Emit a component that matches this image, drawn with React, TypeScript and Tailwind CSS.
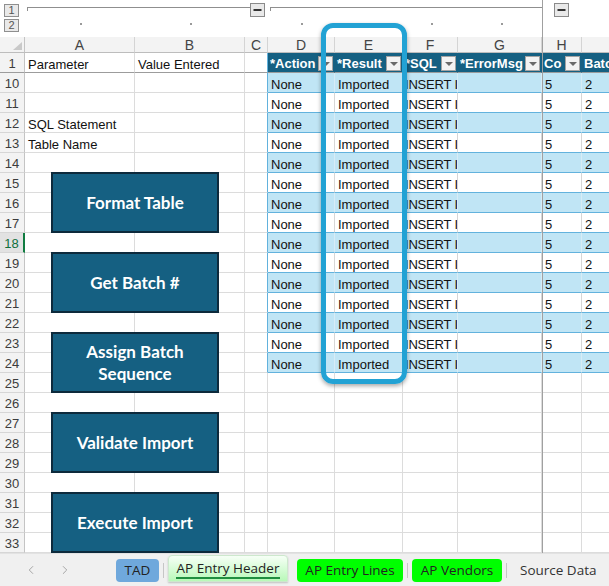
import React from "react";
import { ChevronLeft, ChevronRight } from "lucide-react";

type Col = { k: string; w: string };
const COLS: Col[] = [
  { k: "A", w: "w-[110px]" },
  { k: "B", w: "w-[110px]" },
  { k: "C", w: "w-[23px]" },
  { k: "D", w: "w-[67px]" },
  { k: "E", w: "w-[68px]" },
  { k: "F", w: "w-[55px]" },
  { k: "G", w: "w-[84px]" },
  { k: "H", w: "w-[40px]" },
  { k: "I", w: "w-[60px]" },
];

const TABLE_COLS = ["D", "E", "F", "G", "H", "I"];
const HEADERS: Record<string, string> = {
  D: "*Action",
  E: "*Result",
  F: "*SQL",
  G: "*ErrorMsg",
  H: "Co",
  I: "Batch",
};
const DATA: Record<string, string> = {
  D: "None",
  E: "Imported",
  F: "INSERT INTO",
  G: "",
  H: "5",
  I: "2",
};

const ROWS: number[] = [1];
for (let i = 10; i <= 33; i++) ROWS.push(i);

const A_TEXT: Record<number, string> = {
  1: "Parameter",
  12: "SQL Statement",
  13: "Table Name",
};

function FilterBtn() {
  return (
    <div className="w-[15px] h-[15px] shrink-0 box-border border border-[#a3a3a3] bg-[#f3f3f3] flex items-center justify-center mb-[1px] mr-[1px]">
      <div className="w-0 h-0 border-l-[4px] border-r-[4px] border-t-[4px] border-l-transparent border-r-transparent border-t-[#6a6a6a]" />
    </div>
  );
}

function Cell({ r, c }: { r: number; c: Col }) {
  const inTable = TABLE_COLS.includes(c.k) && (r === 1 || (r >= 10 && r <= 24));
  const base =
    "shrink-0 box-border h-[20px] border-r border-b overflow-hidden whitespace-nowrap text-[13px] " + c.w;
  const bottom =
    r === 1
      ? "border-b-[#9c9c9c]"
      : inTable
      ? "border-b-[#62b2dd]"
      : "border-b-[#dcdcdc]";

  if (inTable && r === 1) {
    return (
      <div className={base + " " + bottom + " border-r-[#156082] bg-[#156082] text-white font-bold flex items-end"}>
        <span className="flex-1 min-w-0 overflow-hidden pl-[2px] leading-[17px]">{HEADERS[c.k]}</span>
        {c.k !== "I" && <FilterBtn />}
      </div>
    );
  }
  if (inTable) {
    const blue = r % 2 === 0;
    const pad = c.k === "F" ? " pl-[2px] pr-0 tracking-[-0.2px]" : " px-[3px]";
    return (
      <div
        className={
          base +
          " " +
          bottom +
          (blue ? " bg-[#c0e5f5] border-r-[#d7ecf6]" : " bg-white border-r-[#d6d6d6]") +
          pad +
          " pt-[3px] leading-[17px] text-[#111]"
        }
      >
        {DATA[c.k]}
      </div>
    );
  }
  const tableEdge = c.k === "C" && (r === 1 || (r >= 10 && r <= 24));
  const right = tableEdge ? "border-r-[#62b2dd]" : "border-r-[#dcdcdc]";
  let text = "";
  if (c.k === "A") text = A_TEXT[r] || "";
  if (c.k === "B" && r === 1) text = "Value Entered";
  return (
    <div className={base + " " + bottom + " " + right + " px-[3px] pt-[3px] leading-[17px] text-[#111]"}>
      {text}
    </div>
  );
}

function RowHeader({ r }: { r: number }) {
  const sel = r === 18;
  return (
    <div
      className={
        "shrink-0 box-border w-[25px] h-[20px] border-b flex items-center justify-center text-[13px] leading-[17px] pt-[2px] " +
        (r === 1 ? "border-b-[#9c9c9c] " : "border-b-[#d6d6d6] ") +
        (sel
          ? "bg-[#e2e2e2] text-[#10703c] border-r-2 border-r-[#107c41]"
          : "bg-[#f3f3f3] text-[#3c3c3c] border-r border-r-[#c4c4c4]")
      }
    >
      {r}
    </div>
  );
}

function Outline() {
  const dots = [55, 165, 276, 344, 406, 476];
  return (
    <div className="flex h-[37px] bg-white">
      <div className="w-[25px] shrink-0 flex flex-col gap-[2px] pl-[4px] pt-[4px]">
        <div className="w-[15px] h-[13px] box-border border border-[#8f8f8f] bg-[#e9e9e9] text-[11px] leading-[11px] text-[#555] flex items-center justify-center">
          1
        </div>
        <div className="w-[15px] h-[13px] box-border border border-[#8f8f8f] bg-[#e9e9e9] text-[11px] leading-[11px] text-[#555] flex items-center justify-center">
          2
        </div>
      </div>
      <svg width="584" height="37" className="shrink-0">
        <line x1="2" y1="7.5" x2="225" y2="7.5" stroke="#8f8f8f" strokeWidth="1" />
        <line x1="2.5" y1="7" x2="2.5" y2="11" stroke="#8f8f8f" strokeWidth="1" />
        <rect x="225.5" y="3.5" width="14" height="13" fill="#e9e9e9" stroke="#8a8a8a" />
        <line x1="228.5" y1="10" x2="236.5" y2="10" stroke="#333" strokeWidth="2" />
        <line x1="245" y1="7.5" x2="517" y2="7.5" stroke="#8f8f8f" strokeWidth="1" />
        <line x1="245.5" y1="7" x2="245.5" y2="11" stroke="#8f8f8f" strokeWidth="1" />
        <rect x="529.5" y="3.5" width="14" height="13" fill="#e9e9e9" stroke="#8a8a8a" />
        <line x1="532.5" y1="10" x2="540.5" y2="10" stroke="#333" strokeWidth="2" />
        {dots.map((x) => (
          <rect key={x} x={x} y="23" width="2" height="2" fill="#9a9a9a" />
        ))}
      </svg>
    </div>
  );
}

function ColumnHeader() {
  return (
    <div className="flex h-[16px]">
      <div className="shrink-0 w-[25px] h-[16px] box-border border-r border-b border-r-[#c4c4c4] border-b-[#bdbdbd] bg-[#f3f3f3] flex items-end justify-end pr-[2px] pb-[2px]">
        <svg width="9" height="8">
          <polygon points="9,0 9,8 0,8" fill="#c9c9c9" />
        </svg>
      </div>
      {COLS.map((c) => (
        <div
          key={c.k}
          className={
            "shrink-0 h-[16px] box-border border-r border-b border-r-[#d4d4d4] border-b-[#bdbdbd] bg-[#f3f3f3] text-[14px] leading-[16px] text-[#444] text-center " +
            c.w
          }
        >
          {c.k}
        </div>
      ))}
    </div>
  );
}

function ActionButton({ lines }: { lines: string[] }) {
  return (
    <div className="w-[168px] h-[61px] box-border border-2 border-[#0d2a3c] bg-[#156082] flex flex-col items-center justify-center text-white font-bold text-[17px] leading-[22px] font-['Lato',sans-serif]">
      {lines.map((l) => (
        <span key={l}>{l}</span>
      ))}
    </div>
  );
}

function TabBar() {
  return (
    <div className="h-[33px] box-border border-t border-t-[#e2e2e2] bg-[#f0f0f0] flex items-end pb-[4px] font-['Open_Sans',sans-serif] text-[13.5px] text-[#222]">
      <ChevronLeft size={14} strokeWidth={1.5} className="ml-[24px] mb-[5px] text-[#9a9a9a]" />
      <ChevronRight size={14} strokeWidth={1.5} className="ml-[20px] mb-[5px] text-[#9a9a9a]" />
      <div className="ml-[44px] w-[43px] h-[23px] rounded-[4px] bg-[#6fa8dc] flex items-center justify-center">TAD</div>
      <div className="ml-[4px] mb-[4px] w-px h-[15px] bg-[#c6c6c6]" />
      <div className="ml-[4px] w-[120px] h-[27px] rounded-t-[4px] box-border border border-[#cde8cd] bg-gradient-to-b from-[#f6fff6] to-[#b8f8b8] shadow-[0_1px_2px_rgba(0,0,0,0.2)] flex flex-col items-center justify-end pb-[2px]">
        <span className="leading-[18px] border-b-2 border-b-[#1f8f3f] px-[1px]">AP Entry Header</span>
      </div>
      <div className="ml-[9px] w-[106px] h-[23px] rounded-[4px] bg-[#00ff00] flex items-center justify-center">AP Entry Lines</div>
      <div className="ml-[4px] mb-[4px] w-px h-[15px] bg-[#c6c6c6]" />
      <div className="ml-[4px] w-[90px] h-[23px] rounded-[4px] bg-[#00ff00] flex items-center justify-center">AP Vendors</div>
      <div className="ml-[4px] mb-[4px] w-px h-[15px] bg-[#c6c6c6]" />
      <div className="ml-[13px] h-[23px] flex items-center text-[#333] whitespace-nowrap">Source Data</div>
    </div>
  );
}

export default function App() {
  return (
    <div className="relative w-[609px] h-[586px] overflow-hidden bg-white font-['Liberation_Sans',Arial,sans-serif]">
      <Outline />
      <ColumnHeader />
      {ROWS.map((r) => (
        <div key={r} className="flex h-[20px]">
          <RowHeader r={r} />
          {COLS.map((c) => (
            <Cell key={c.k} r={r} c={c} />
          ))}
        </div>
      ))}
      <TabBar />

      {/* freeze pane divider */}
      <div className="absolute left-[542px] top-0 w-px h-[553px] bg-[#a0a0a0]" />

      {/* floating shape buttons */}
      <div className="absolute left-[51px] top-[172px]">
        <ActionButton lines={["Format Table"]} />
      </div>
      <div className="absolute left-[51px] top-[252px]">
        <ActionButton lines={["Get Batch #"]} />
      </div>
      <div className="absolute left-[51px] top-[332px]">
        <ActionButton lines={["Assign Batch", "Sequence"]} />
      </div>
      <div className="absolute left-[51px] top-[412px]">
        <ActionButton lines={["Validate Import"]} />
      </div>
      <div className="absolute left-[51px] top-[492px]">
        <ActionButton lines={["Execute Import"]} />
      </div>

      {/* highlight callout */}
      <div className="absolute left-[321px] top-[23px] w-[86px] h-[361px] box-border border-[5px] border-[#22a2d4] rounded-[12px] shadow-[0_2px_4px_rgba(0,0,0,0.35)]" />
    </div>
  );
}
